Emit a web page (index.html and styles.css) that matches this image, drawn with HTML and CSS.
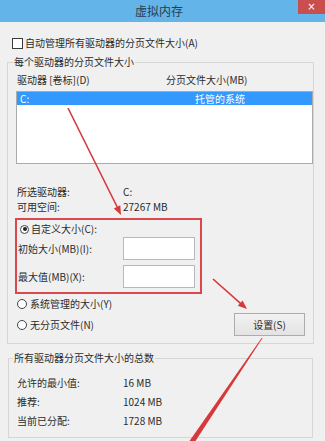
FILE: index.html
```html
<!DOCTYPE html>
<html lang="zh-CN">
<head>
    <meta charset="UTF-8">
    <meta name="viewport" content="width=device-width, initial-scale=1.0">
    <title>虚拟内存</title>
    <link rel="stylesheet" href="styles.css">
</head>
<body>

    <div class="titlebar">
        <span class="title">虚拟内存</span>
        <span class="close">×</span>
    </div>

    <div class="check-row">
        <span class="checkbox"></span>
        <span>自动管理所有驱动器的分页文件大小(A)</span>
    </div>

    <fieldset class="group group-drives">
        <legend>每个驱动器的分页文件大小</legend>
        <div class="list-head">
            <span class="head-drive">驱动器 [卷标](D)</span>
            <span>分页文件大小(MB)</span>
        </div>
        <div class="listbox">
            <div class="list-item selected">
                <span class="item-drive">C:</span>
                <span>托管的系统</span>
            </div>
        </div>

        <div class="info-row first"><span class="info-label">所选驱动器:</span><span>C:</span></div>
        <div class="info-row"><span class="info-label">可用空间:</span><span>27267 MB</span></div>

        <div class="custom-box">
            <div class="radio-row">
                <span class="radio checked"></span>
                <span>自定义大小(C):</span>
            </div>
            <div class="field-row">
                <span class="field-label">初始大小(MB)(I):</span>
                <span class="textbox"></span>
            </div>
            <div class="field-row second">
                <span class="field-label">最大值(MB)(X):</span>
                <span class="textbox"></span>
            </div>
        </div>

        <div class="radio-row plain">
            <span class="radio"></span>
            <span>系统管理的大小(Y)</span>
        </div>
        <div class="radio-row plain with-button">
            <span class="radio"></span>
            <span class="grow">无分页文件(N)</span>
            <button class="button">设置(S)</button>
        </div>
    </fieldset>

    <fieldset class="group group-total">
        <legend>所有驱动器分页文件大小的总数</legend>
        <div class="total-row first"><span class="info-label">允许的最小值:</span><span>16 MB</span></div>
        <div class="total-row"><span class="info-label">推荐:</span><span>1024 MB</span></div>
        <div class="total-row"><span class="info-label">当前已分配:</span><span>1728 MB</span></div>
    </fieldset>

    <!-- red annotation arrows drawn over the screenshot -->
    <svg class="arrows" viewBox="0 0 325 441" width="325" height="441">
        <line x1="68" y1="108" x2="117.2" y2="207" stroke="#d6383b" stroke-width="1.6"/>
        <polygon points="121,215 120.3,205.2 113.8,208.6" fill="#d6383b"/>
        <line x1="213" y1="279" x2="240.5" y2="303.3" stroke="#d6383b" stroke-width="1.6"/>
        <polygon points="247,309 242.6,300.4 237.8,305.8" fill="#d6383b"/>
        <polygon points="261.6,338 262.6,338 195.5,441 189.5,441" fill="#d6383b"/>
    </svg>

</body>
</html>
```

FILE: styles.css
```css
body {
    margin: 0;
    width: 325px;
    height: 441px;
    overflow: hidden;
    position: relative;
    background-color: #f0f0f0;
    font-family: "Noto Sans CJK SC", "Noto Sans", sans-serif;
    font-size: 10px;
    color: #2b2b2b;
}
.titlebar {
    height: 22px;
    background-color: #63b5e9;
    display: grid;
    grid-template-columns: 27px 1fr 27px;
    align-items: start;
}
.title {
    grid-column: 2;
    text-align: center;
    line-height: 22px;
    font-size: 12px;
    color: #2a3b4c;
    padding-right: 7px;
}
.close {
    grid-column: 3;
    height: 14px;
    background-color: #c94f4f;
    color: #fff;
    display: flex;
    align-items: center;
    justify-content: center;
    font-family: "DejaVu Sans", sans-serif;
    font-size: 10px;
    line-height: 1;
}
.check-row {
    display: flex;
    align-items: center;
    gap: 2px;
    height: 14px;
    line-height: 14px;
    margin-top: 14px;
    padding-left: 12px;
}
.checkbox {
    width: 9px;
    height: 9px;
    border: 1px solid #3a3a3a;
    background-color: #fff;
}
.group {
    border: 1px solid #d6d6d6;
    min-width: 0;
}
.group legend {
    padding: 0 1px;
    line-height: 14px;
}
.group-drives {
    margin: 5px 11px 0 7px;
    padding: 0 0 7px 0;
}
.group-drives legend {
    margin-left: 5px;
}
.list-head {
    display: flex;
    margin-top: 4px;
    padding-left: 9px;
    line-height: 14px;
}
.head-drive {
    width: 149px;
}
.listbox {
    margin: 4px 0 0 8px;
    height: 71px;
    border: 1px solid #ababab;
    background-color: #fff;
}
.list-item {
    display: flex;
    height: 13px;
    line-height: 13px;
    padding-left: 3px;
}
.list-item.selected {
    background-color: #3399ff;
    color: #fff;
}
.item-drive {
    width: 175px;
}
.info-row {
    display: flex;
    padding-left: 9px;
    line-height: 15px;
}
.info-row.first {
    margin-top: 20px;
}
.info-label {
    width: 106px;
}
.custom-box {
    margin: 4px 0 0 7px;
    width: 183px;
    border: 2px solid #d9484c;
    padding: 2px 0 4px 0;
}
.radio-row {
    display: flex;
    align-items: center;
    gap: 2px;
    height: 14px;
    line-height: 14px;
    padding-left: 3px;
}
.radio {
    width: 7px;
    height: 7px;
    border: 1px solid #444;
    border-radius: 50%;
    background-color: #fff;
    position: relative;
}
.radio.checked::after {
    content: "";
    position: absolute;
    left: 1.5px;
    top: 1.5px;
    width: 4px;
    height: 4px;
    border-radius: 50%;
    background-color: #222;
}
.field-row {
    display: flex;
    align-items: center;
    margin-top: 1px;
    padding-left: 1px;
}
.field-row.second {
    margin-top: 5px;
}
.field-label {
    width: 105px;
}
.textbox {
    width: 72px;
    height: 23px;
    box-sizing: border-box;
    border: 1px solid #b8b8b8;
    background-color: #fff;
}
.radio-row.plain {
    margin-top: 3px;
    padding-left: 9px;
    gap: 3px;
}
.radio-row.plain .radio {
    width: 8px;
    height: 8px;
}
.radio-row.with-button {
    height: 23px;
    margin-top: 2px;
}
.grow {
    flex: 1;
}
.button {
    width: 71px;
    height: 23px;
    margin-right: 8px;
    border: 1px solid #acacac;
    background: linear-gradient(#f2f2f2, #e3e3e3);
    font-family: "Noto Sans CJK SC", "Noto Sans", sans-serif;
    font-size: 10px;
    color: #2b2b2b;
    padding: 0;
}
.group-total {
    margin: 7px 12px 0 8px;
    padding: 0 0 7px 0;
}
.group-total legend {
    margin-left: 4px;
}
.total-row {
    display: flex;
    padding-left: 8px;
    line-height: 19px;
}
.total-row.first {
    margin-top: 8px;
}
.arrows {
    position: absolute;
    top: 0;
    left: 0;
    pointer-events: none;
}
```
